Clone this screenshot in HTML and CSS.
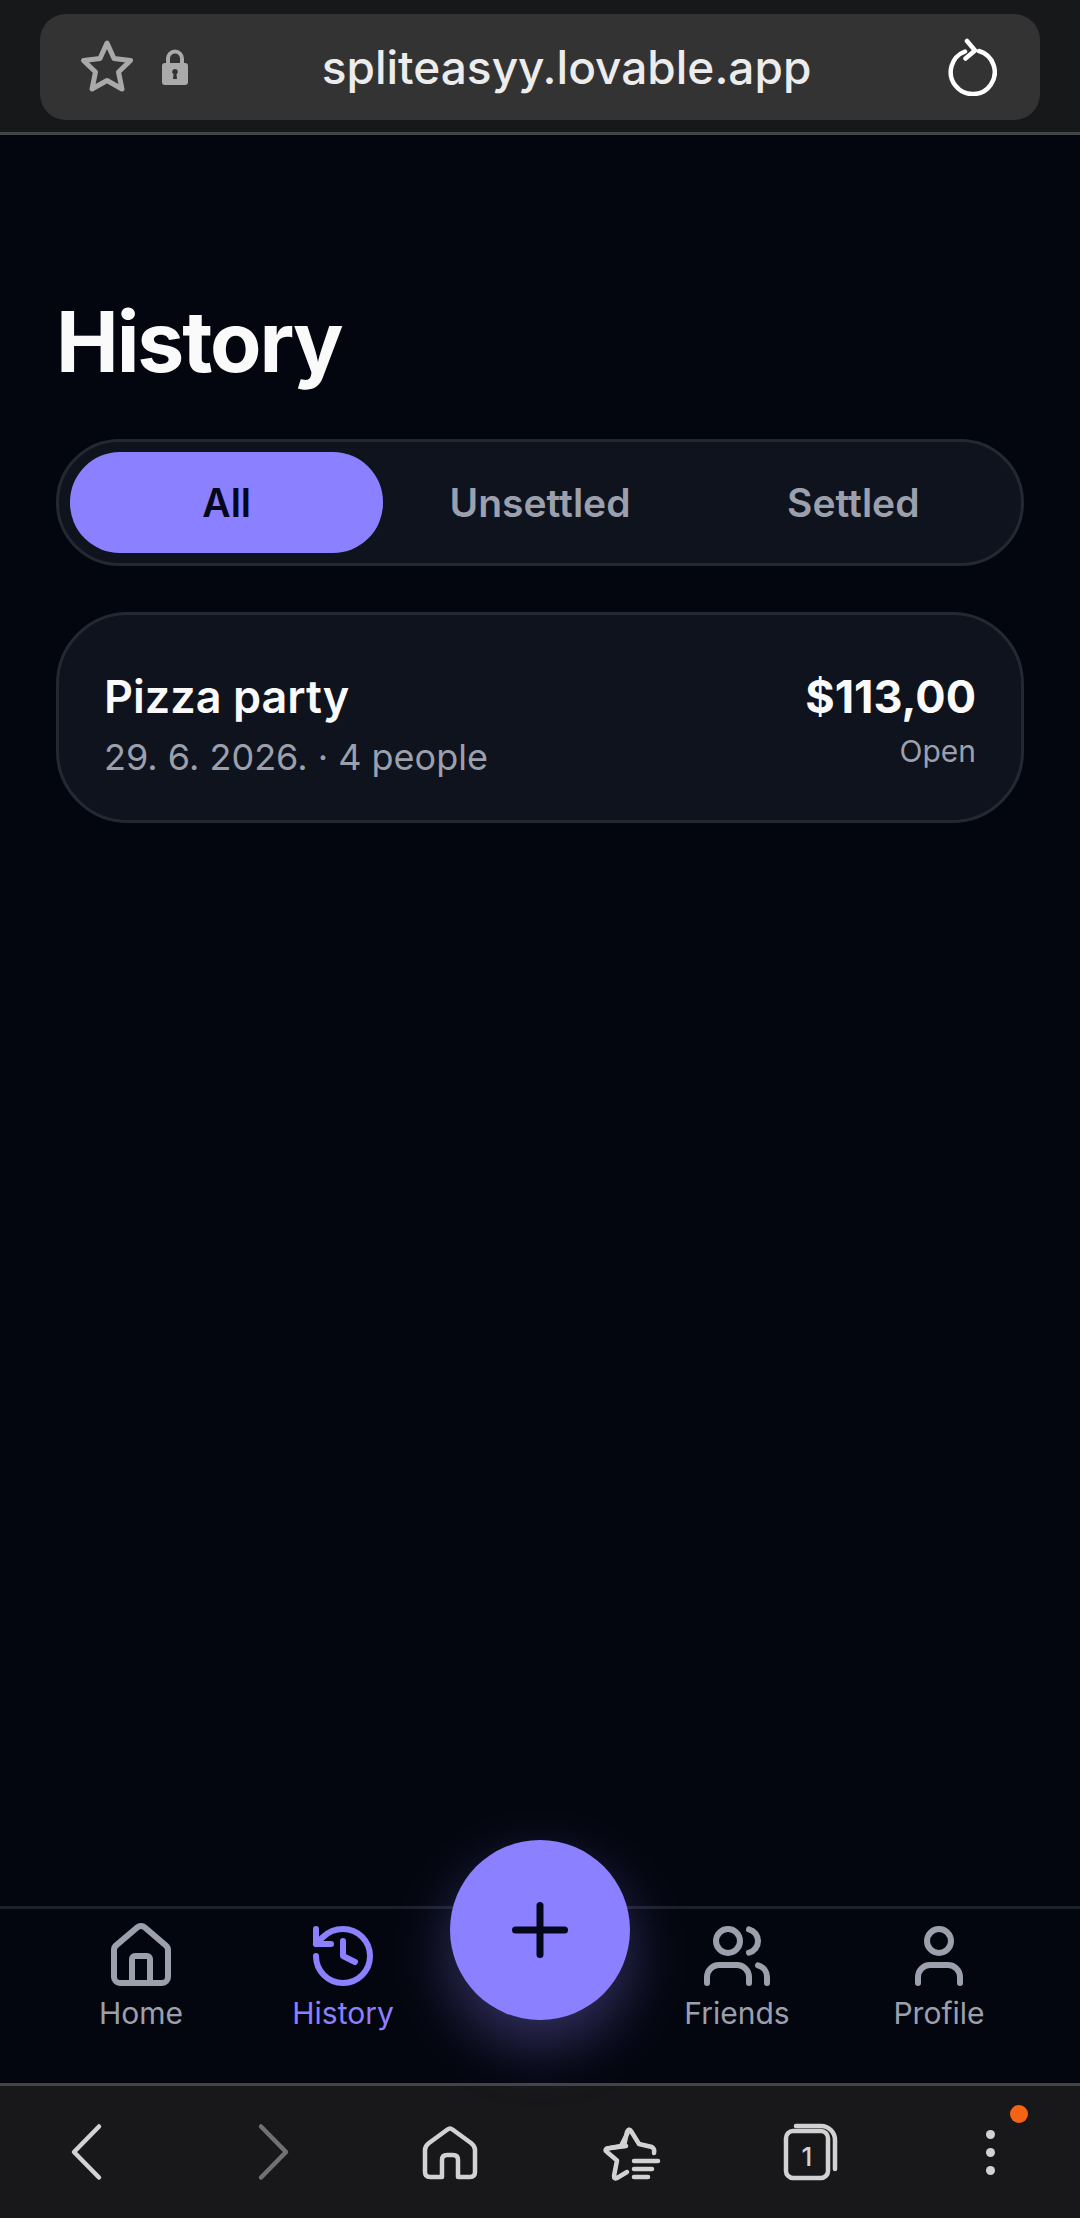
FILE: index.html
```html
<!DOCTYPE html>
<html lang="en">
<head>
<meta charset="utf-8">
<title>History</title>
<link rel="stylesheet" href="styles.css">
</head>
<body>
<div class="screen">
  <header class="address-bar">
    <div class="url-pill">
      <svg class="icon-star" viewBox="0 0 58 58" fill="none"><path d="M29 5 L36 20.5 L52.5 22.5 L40.5 34 L44 51 L29 42.5 L14 51 L17.5 34 L5.5 22.5 L22 20.5 Z" stroke-linejoin="round"/></svg>
      <svg class="icon-lock" viewBox="0 0 26 36"><path class="shackle" d="M6 16V9.500a7 7 0 0 1 14 0V16" fill="none"/><path class="lock-body" fill-rule="evenodd" d="M3 14h20a3 3 0 0 1 3 3v16a3 3 0 0 1-3 3H3a3 3 0 0 1-3-3V17a3 3 0 0 1 3-3zM13 20a2.800 2.800 0 0 0-1.500 5.200L11 30h4l-.5-4.800A2.800 2.800 0 0 0 13 20z"/></svg>
      <span class="url-text">spliteasyy.lovable.app</span>
      <svg class="icon-reload" viewBox="0 0 52 58" fill="none"><path d="M20 13.500A22 22 0 1 0 34 13M22 3l8 9.500-9.500 8"/></svg>
    </div>
  </header>

  <main class="content">
    <h1 class="page-title">History</h1>
    <div class="tabs">
      <div class="tab tab-active">All</div>
      <div class="tab">Unsettled</div>
      <div class="tab">Settled</div>
    </div>
    <article class="bill">
      <div class="bill-col">
        <div class="bill-name">Pizza party</div>
        <div class="bill-meta">29. 6. 2026. · 4 people</div>
      </div>
      <div class="bill-col bill-col-end">
        <div class="bill-amount">$113,00</div>
        <div class="bill-status">Open</div>
      </div>
    </article>
  </main>

  <nav class="tabbar">
    <div class="tabbar-item">
      <svg class="lucide" viewBox="0 0 24 24"><path d="M15 21v-8a1 1 0 0 0-1-1h-4a1 1 0 0 0-1 1v8"/><path d="M3 10a2 2 0 0 1 .709-1.528l7-5.999a2 2 0 0 1 2.582 0l7 5.999A2 2 0 0 1 21 10v9a2 2 0 0 1-2 2H5a2 2 0 0 1-2-2z"/></svg>
      <span>Home</span>
    </div>
    <div class="tabbar-item tabbar-item-active">
      <svg class="lucide" viewBox="0 0 24 24"><path d="M3 12a9 9 0 1 0 9-9 9.750 9.750 0 0 0-6.740 2.740L3 8"/><path d="M3 3v5h5"/><path d="M12 7v5l4 2"/></svg>
      <span>History</span>
    </div>
    <div class="tabbar-gap"></div>
    <div class="tabbar-item">
      <svg class="lucide" viewBox="0 0 24 24"><path d="M16 21v-2a4 4 0 0 0-4-4H6a4 4 0 0 0-4 4v2"/><circle cx="9" cy="7" r="4"/><path d="M22 21v-2a4 4 0 0 0-3-3.870"/><path d="M16 3.130a4 4 0 0 1 0 7.750"/></svg>
      <span>Friends</span>
    </div>
    <div class="tabbar-item">
      <svg class="lucide" viewBox="0 0 24 24"><path d="M19 21v-2a4 4 0 0 0-4-4H9a4 4 0 0 0-4 4v2"/><circle cx="12" cy="7" r="4"/></svg>
      <span>Profile</span>
    </div>
    <button class="fab" type="button" aria-label="Add">
      <svg class="fab-plus" viewBox="0 0 24 24"><path d="M5 12h14"/><path d="M12 5v14"/></svg>
    </button>
  </nav>

  <footer class="browser-bar">
    <svg class="tool" viewBox="0 0 60 60"><path d="M39 4.500 L14 30 L39 55.500"/></svg>
    <svg class="tool tool-dim" viewBox="0 0 60 60"><path d="M21 4.500 L46 30 L21 55.500"/></svg>
    <svg class="tool" viewBox="0 0 60 60"><path d="M9 21 L27.500 7.500 a4 4 0 0 1 5 0 L51 21 q4 3 4 7 v22 q0 5 -5 5 H38 V38 q0 -5 -5 -5 h-6 q-5 0 -5 5 V55 H10 q-5 0 -5 -5 V28 q0 -4 4 -7z"/></svg>
    <svg class="tool" viewBox="0 0 60 60"><path d="M26 24 L7 26.500 Q4 28 7 30 L17 38.500 L14 54 Q14 57.500 17 56 L27 50"/><path d="M26 24 L29 10 Q31 6 33 9 L41 22 L54 25 Q57 27 56 31" transform="translate(-2 0)"/><path d="M7 26.500 L21 24 L29 8" /><path class="tool-lines" d="M34 39h24M34 47h18M34 55h14"/></svg>
    <svg class="tool" viewBox="0 0 60 60"><rect x="6" y="9" width="42" height="47" rx="7"/><path class="tool-thin" d="M16 4h25a14 14 0 0 1 14 14v29"/><text class="tab-count" x="27" y="44">1</text></svg>
    <div class="menu-cell">
      <span class="dot"></span><span class="dot"></span><span class="dot"></span>
      <span class="badge"></span>
    </div>
  </footer>
</div>
</body>
</html>
```

FILE: styles.css
```css
* { box-sizing: border-box; }

html, body { margin: 0; padding: 0; }

body {
  background: #04060f;
  font-family: Inter, "Liberation Sans", sans-serif;
}

.screen {
  width: 1080px;
  height: 2218px;
  display: flex;
  flex-direction: column;
  overflow: hidden;
}

/* Browser chrome, top */
.address-bar {
  height: 135px;
  padding: 14px 40px 12px;
  background: #17181a;
  border-bottom: 3px solid #434448;
}

.url-pill {
  height: 106px;
  display: flex;
  align-items: center;
  padding: 0 43px 0 38px;
  border-radius: 26px;
  background: #333334;
}

.icon-star {
  width: 58px;
  height: 58px;
  stroke: #a9a9a9;
  stroke-width: 5;
}

.icon-lock {
  width: 26px;
  height: 36px;
  margin-left: 26px;
}

.shackle { stroke: #aaaaaa; stroke-width: 4; }
.lock-body { fill: #aaaaaa; }

.url-text {
  flex: 1;
  text-align: center;
  color: #ececec;
  font-size: 46px;
  font-weight: 500;
  line-height: 56px;
}

.icon-reload {
  width: 52px;
  height: 58px;
  stroke: #ffffff;
  stroke-width: 4.500;
  stroke-linecap: round;
  stroke-linejoin: round;
}

/* Page body */
.content {
  flex: 1;
  padding: 159px 56px 0;
}

.page-title {
  margin: 0 0 49px;
  color: #fafafa;
  font-size: 84px;
  line-height: 96px;
  font-weight: 700;
  letter-spacing: -2.100px;
}

.tabs {
  height: 127px;
  display: flex;
  padding: 10px 11px;
  border: 3px solid #232833;
  border-radius: 64px;
  background: #0e131e;
}

.tab {
  flex: 1;
  display: flex;
  align-items: center;
  justify-content: center;
  border-radius: 50px;
  color: #9ca0ad;
  font-size: 39px;
  font-weight: 600;
}

.tab-active {
  background: #8b80ff;
  color: #05071a;
}

.bill {
  height: 211px;
  margin-top: 46px;
  display: flex;
  justify-content: space-between;
  padding: 54px 45px 0;
  border: 3px solid #232833;
  border-radius: 72px;
  background: #0e131e;
}

.bill-col { display: flex; flex-direction: column; }
.bill-col-end { align-items: flex-end; }

.bill-name {
  color: #fafafa;
  font-size: 45px;
  line-height: 56px;
  font-weight: 600;
}

.bill-amount {
  color: #fafafa;
  font-size: 45px;
  line-height: 56px;
  font-weight: 700;
}

.bill-meta {
  margin-top: 4px;
  color: #9ca0ad;
  font-size: 36px;
  line-height: 56px;
}

.bill-status {
  margin-top: 4px;
  color: #9ca0ad;
  font-size: 30px;
  line-height: 44px;
}

/* Bottom tab bar */
.tabbar {
  position: relative;
  height: 177px;
  display: grid;
  grid-template-columns: 202px 202px 192px 202px 202px;
  padding: 11px 40px 0;
  border-top: 3px solid #1c202b;
}

.tabbar-item {
  display: flex;
  flex-direction: column;
  align-items: center;
  color: #9ca0ad;
  font-size: 30px;
  line-height: 42px;
}

.tabbar-item-active { color: #8b80ff; }

.lucide {
  width: 72px;
  height: 72px;
  fill: none;
  stroke: currentColor;
  stroke-width: 2;
  stroke-linecap: round;
  stroke-linejoin: round;
}

.fab {
  position: absolute;
  left: 450px;
  top: -69px;
  width: 180px;
  height: 180px;
  display: flex;
  align-items: center;
  justify-content: center;
  padding: 0;
  border: 0;
  border-radius: 50%;
  background: #8b80ff;
  box-shadow: 0 24px 60px rgba(139, 128, 255, 0.35);
}

.fab-plus {
  width: 84px;
  height: 84px;
  fill: none;
  stroke: #05071a;
  stroke-width: 2;
  stroke-linecap: round;
}

/* Browser chrome, bottom */
.browser-bar {
  height: 135px;
  display: grid;
  grid-template-columns: repeat(6, 180px);
  justify-items: center;
  align-items: center;
  padding-bottom: 0;
  background: #18181a;
  border-top: 3px solid #434448;
}

.tool {
  width: 60px;
  height: 60px;
  overflow: visible;
  fill: none;
  stroke: #d2d2d2;
  stroke-width: 4.500;
  stroke-linecap: round;
  stroke-linejoin: round;
}

.tool-dim { stroke: #717171; }
.tool-lines { stroke-width: 4.500; }

.tab-count {
  fill: #d2d2d2;
  stroke: none;
  font-size: 26px;
  font-weight: 500;
  text-anchor: middle;
}

.menu-cell {
  position: relative;
  height: 45px;
  display: flex;
  flex-direction: column;
  justify-content: space-between;
}

.dot {
  width: 9px;
  height: 9px;
  border-radius: 50%;
  background: #d2d2d2;
}

.badge {
  position: absolute;
  left: 24px;
  top: -25px;
  width: 18px;
  height: 18px;
  border-radius: 50%;
  background: #f46414;
}
```
